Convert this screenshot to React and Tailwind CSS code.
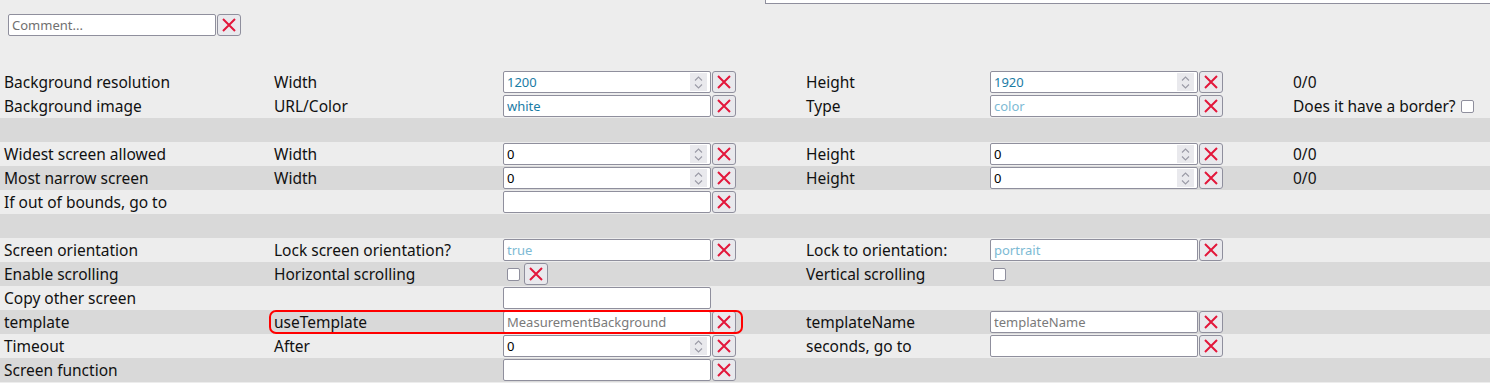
import React from "react";

const FONT = { fontFamily: '"Noto Sans", "Open Sans", sans-serif' };

function XBtn() {
  return (
    <button className="w-[24px] h-[22px] shrink-0 border border-[#8f8f9d] rounded-[3px] bg-[#e9e9ed] flex items-center justify-center p-0">
      <svg width="14" height="14" viewBox="0 0 14 14">
        <path d="M1 1L13 13M13 1L1 13" stroke="#e3173b" strokeWidth="2" />
      </svg>
    </button>
  );
}

function Check() {
  return (
    <div className="w-[13px] h-[13px] shrink-0 border border-[#8f8f9d] rounded-[2px] bg-white" />
  );
}

function Spinner() {
  return (
    <div className="w-[17px] h-[18px] mr-[3px] bg-[#e9e9ed] flex flex-col items-center justify-center gap-[3px] shrink-0">
      <svg width="9" height="5" viewBox="0 0 9 5">
        <path d="M1 4.5L4.5 1L8 4.5" stroke="#9a9aa6" strokeWidth="1.1" fill="none" />
      </svg>
      <svg width="9" height="5" viewBox="0 0 9 5">
        <path d="M1 0.5L4.5 4L8 0.5" stroke="#9a9aa6" strokeWidth="1.1" fill="none" />
      </svg>
    </div>
  );
}

function Input({ value = "", placeholder = "", tone = "black", num = false }) {
  const txt =
    tone === "blue" || tone === "ph-blue"
      ? "text-[#1b7ca5] placeholder:text-[#7dbad4]"
      : "text-black placeholder:text-[#7a7a7a]";
  return (
    <div className="w-[208px] h-[22px] shrink-0 border border-[#8f8f9d] rounded-[2px] bg-white flex items-center">
      <input
        readOnly
        defaultValue={value}
        placeholder={placeholder}
        className={`flex-1 min-w-0 h-full bg-transparent outline-none pl-[3px] text-[13px] ${txt}`}
        style={FONT}
      />
      {num && <Spinner />}
    </div>
  );
}

function Field({ x = true, ...props }) {
  return (
    <div className="flex items-center gap-px">
      <Input {...props} />
      {x && <XBtn />}
    </div>
  );
}

function Row({ gray, cells = [], children }) {
  return (
    <div
      className={`relative grid grid-cols-[270px_229px_303px_184px_303px_1fr] h-[24px] items-center pl-[4px] text-[15.5px] text-[#111] leading-[24px] whitespace-nowrap ${
        gray ? "bg-[#d9d9d9]" : "bg-[#ededed]"
      }`}
    >
      {cells.map((c, i) => (
        <div key={i} className="flex items-center h-[24px]">
          {c}
        </div>
      ))}
      {children}
    </div>
  );
}

export default function App() {
  return (
    <div className="w-[1490px] h-[383px] bg-[#ededed] overflow-hidden" style={FONT}>
      <div className="relative h-[70px]">
        <div className="absolute left-[765px] right-0 top-0 h-[4px] border-l border-b border-[#8f8f9d] bg-white" />
        <div className="pt-[14px] pl-[8px] flex items-center gap-px">
          <div className="w-[208px] h-[22px] border border-[#8f8f9d] rounded-[2px] bg-white flex items-center">
            <input
              readOnly
              placeholder="Comment..."
              className="w-full h-full bg-transparent outline-none pl-[3px] text-[13px] placeholder:text-[#707070]"
              style={FONT}
            />
          </div>
          <XBtn />
        </div>
      </div>

      <Row
        cells={[
          "Background resolution",
          "Width",
          <Field value="1200" tone="blue" num />,
          "Height",
          <Field value="1920" tone="blue" num />,
          "0/0",
        ]}
      />
      <Row
        cells={[
          "Background image",
          "URL/Color",
          <Field value="white" tone="blue" />,
          "Type",
          <Field placeholder="color" tone="ph-blue" />,
          <div className="flex items-center gap-[5px]">
            <span>Does it have a border?</span>
            <Check />
          </div>,
        ]}
      />
      <Row gray />
      <Row
        cells={[
          "Widest screen allowed",
          "Width",
          <Field value="0" num />,
          "Height",
          <Field value="0" num />,
          "0/0",
        ]}
      />
      <Row
        gray
        cells={[
          "Most narrow screen",
          "Width",
          <Field value="0" num />,
          "Height",
          <Field value="0" num />,
          "0/0",
        ]}
      />
      <Row cells={["If out of bounds, go to", "", <Field />]} />
      <Row gray />
      <Row
        cells={[
          "Screen orientation",
          "Lock screen orientation?",
          <Field placeholder="true" tone="ph-blue" />,
          "Lock to orientation:",
          <Field placeholder="portrait" tone="ph-blue" />,
        ]}
      />
      <Row
        gray
        cells={[
          "Enable scrolling",
          "Horizontal scrolling",
          <div className="flex items-center gap-[4px] pl-[4px]">
            <Check />
            <XBtn />
          </div>,
          "Vertical scrolling",
          <div className="pl-[3px] flex items-center">
            <Check />
          </div>,
        ]}
      />
      <Row cells={["Copy other screen", "", <Field x={false} />]} />
      <Row
        gray
        cells={[
          "template",
          "useTemplate",
          <Field placeholder="MeasurementBackground" />,
          "templateName",
          <Field placeholder="templateName" />,
        ]}
      >
        <div className="absolute left-[269px] w-[474px] top-0 h-[24px] border-2 border-[#ff0000] rounded-[7px] pointer-events-none" />
      </Row>
      <Row
        cells={[
          "Timeout",
          "After",
          <Field value="0" num />,
          "seconds, go to",
          <Field />,
        ]}
      />
      <Row gray cells={["Screen function", "", <Field />]} />
    </div>
  );
}
